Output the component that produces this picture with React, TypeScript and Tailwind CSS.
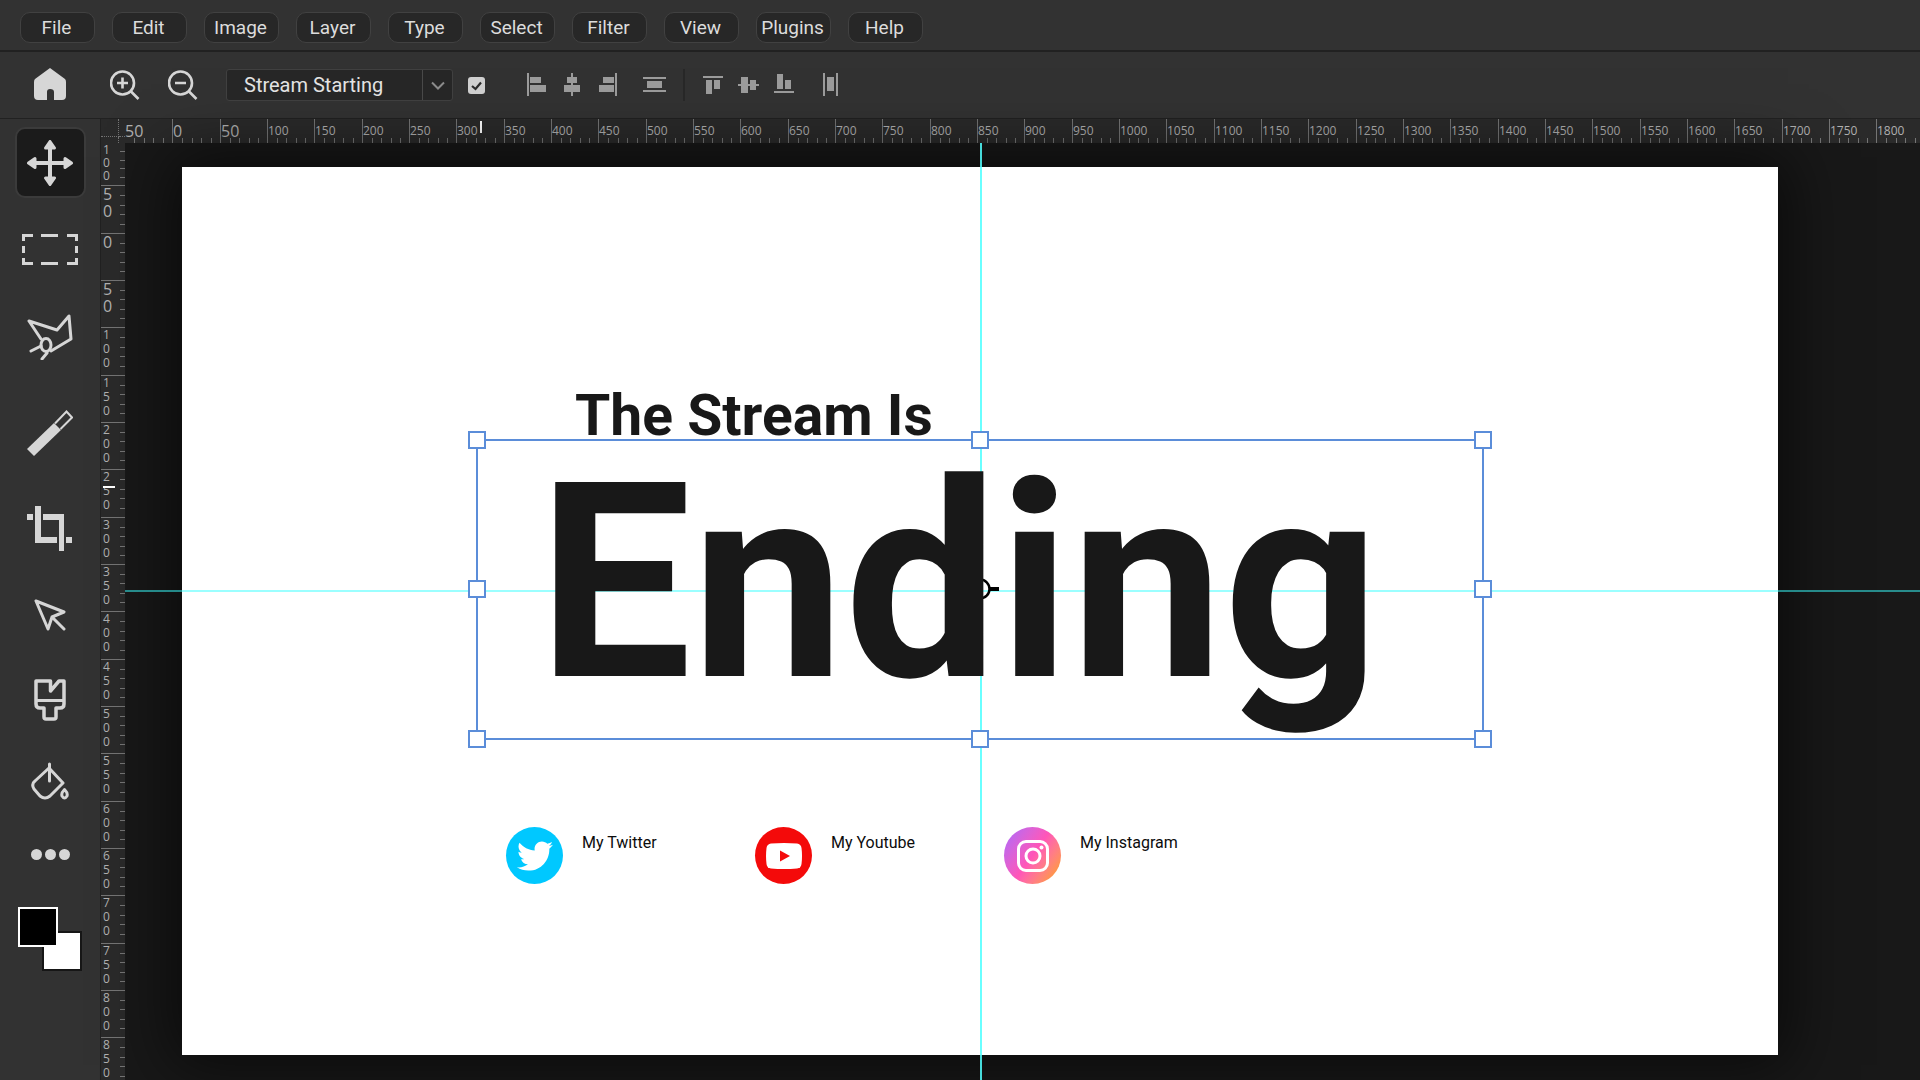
import type { ReactNode } from "react";
import { FaTwitter } from "react-icons/fa";

const menus = [
  "File",
  "Edit",
  "Image",
  "Layer",
  "Type",
  "Select",
  "Filter",
  "View",
  "Plugins",
  "Help",
];

// 50 ruler units on screen
const STEP = 142 / 3;

function MenuBar() {
  return (
    <nav className="flex h-[52px] shrink-0 items-center gap-[17px] border-b-2 border-[#212121] px-5 pt-1">
      {menus.map((menu) => (
        <button
          key={menu}
          type="button"
          className="flex h-[31px] w-[75px] items-center justify-center rounded-[10px] border border-[#414141] bg-[#272727] pt-px pr-0.5 text-[19px] leading-7 text-[#dcdcdc]"
        >
          {menu}
        </button>
      ))}
    </nav>
  );
}

function AlignButton({ label, children }: { label: string; children: ReactNode }) {
  return (
    <button type="button" aria-label={label}>
      <svg width="24" height="24" viewBox="0 0 24 24" fill="#9c9c9c">
        {children}
      </svg>
    </button>
  );
}

function OptionsBar() {
  return (
    <div className="flex h-[67px] shrink-0 items-center border-b border-[#212121] pl-[34px]">
      <button type="button" aria-label="Home">
        <svg width="32" height="34" viewBox="0 0 32 34" fill="#d6d6d6">
          <path d="M16 0 L31 11 Q32 12 32 14 V28 Q32 32 28 32 H20 V24 Q20 21 16 21 Q13 21 13 24 V32 H4 Q0 32 0 28 V14 Q0 12 1 11 Z" />
        </svg>
      </button>
      <div className="ml-11 flex gap-7">
        <button type="button" aria-label="Zoom in">
          <svg width="30" height="30" viewBox="0 0 30 30" fill="none" stroke="#d6d6d6" strokeWidth="2.6">
            <circle cx="12.500" cy="13" r="11.500" />
            <path d="M20.500 21 L28.500 29 M7 13 H18 M12.500 7.500 V18.500" />
          </svg>
        </button>
        <button type="button" aria-label="Zoom out">
          <svg width="30" height="30" viewBox="0 0 30 30" fill="none" stroke="#d6d6d6" strokeWidth="2.6">
            <circle cx="12.500" cy="13" r="11.500" />
            <path d="M20.500 21 L28.500 29 M7 13 H18" />
          </svg>
        </button>
      </div>
      <div className="relative ml-7 h-8 w-[227px]">
        <select
          aria-label="Scene"
          className="h-8 w-full appearance-none rounded-[3px] border border-[#414141] bg-[#272727] pr-8 pl-[17px] text-[20px] leading-7 text-[#e4e4e4]"
        >
          <option>Stream Starting</option>
          <option>Stream Ending</option>
        </select>
        <span className="pointer-events-none absolute inset-y-px right-px flex w-[30px] items-center justify-center border-l border-[#4a4a4a]">
          <svg width="14" height="9" viewBox="0 0 14 9" fill="none" stroke="#8c8c8c" strokeWidth="2">
            <path d="M1 1.500 L7 7.500 L13 1.500" />
          </svg>
        </span>
      </div>
      <label className="ml-[15px] grid h-[17px] w-[17px]">
        <input
          type="checkbox"
          defaultChecked
          aria-label="Show transform controls"
          className="peer col-start-1 row-start-1 appearance-none rounded-[3px] bg-[#d0d0d0]"
        />
        <svg
          className="pointer-events-none invisible col-start-1 row-start-1 peer-checked:visible"
          width="17"
          height="17"
          viewBox="0 0 17 17"
          fill="none"
          stroke="#2b2b2b"
          strokeWidth="2.2"
        >
          <path d="M4 9 L7.500 12 L13 5.500" />
        </svg>
      </label>
      <div className="ml-[42px] flex items-center gap-3">
        <AlignButton label="Align left edges">
          <path d="M0 0 H2 V23 H0 Z M3 4 H14 V10 H3 Z M3 12 H19 V19 H3 Z" />
        </AlignButton>
        <AlignButton label="Align horizontal centers">
          <path d="M8 0 H10 V23 H8 Z M4 4 H14 V10 H4 Z M1 12 H17 V19 H1 Z" />
        </AlignButton>
        <AlignButton label="Align right edges">
          <path d="M16 0 H18 V23 H16 Z M4 4 H15 V10 H4 Z M-1 12 H15 V19 H-1 Z" />
        </AlignButton>
      </div>
      <div className="ml-5 flex border-r-2 border-[#282828] py-1 pr-4">
        <AlignButton label="Distribute vertical centers">
          <path d="M0 4 H23 V6 H0 Z M4 8 H19 V15 H4 Z M0 17 H23 V19 H0 Z" />
        </AlignButton>
      </div>
      <div className="ml-[17px] flex items-center gap-3">
        <AlignButton label="Align top edges">
          <path d="M1 3 H21 V5 H1 Z M4 7 H10 V21 H4 Z M12 7 H18 V16 H12 Z" />
        </AlignButton>
        <AlignButton label="Align vertical centers">
          <path d="M0 11 H21 V13 H0 Z M3 4 H10 V20 H3 Z M12 7 H18 V17 H12 Z" />
        </AlignButton>
        <AlignButton label="Align bottom edges">
          <path d="M0 18 H20 V20 H0 Z M3 1 H9 V16 H3 Z M11 7 H17 V16 H11 Z" />
        </AlignButton>
      </div>
      <div className="ml-6 flex">
        <AlignButton label="Distribute horizontal centers">
          <path d="M1 0 H3 V23 H1 Z M5 4 H12 V18 H5 Z M14 0 H16 V23 H14 Z" />
        </AlignButton>
      </div>
    </div>
  );
}

function ToolBar() {
  return (
    <aside className="flex w-[101px] shrink-0 flex-col items-center overflow-hidden border-r border-[#212121] pt-2">
      <button
        type="button"
        aria-label="Move"
        className="mb-2 flex h-[71px] w-[71px] shrink-0 items-center justify-center rounded-[10px] border-2 border-[#3b3b3b] bg-[#1b1b1b]"
      >
        <svg width="46" height="46" viewBox="0 0 46 46" fill="#d6d6d6" stroke="#d6d6d6" strokeLinejoin="round">
          <path d="M23 6 V40 M6 23 H40" strokeWidth="4" />
          <path
            d="M23 1.500 L27.500 8 H18.500 Z M23 44.500 L27.500 38 H18.500 Z M1.500 23 L8 18.500 V27.500 Z M44.500 23 L38 18.500 V27.500 Z"
            strokeWidth="3"
          />
        </svg>
      </button>
      <button type="button" aria-label="Rectangular marquee" className="flex h-[87px] shrink-0 items-center">
        <svg width="56" height="31" viewBox="0 0 56 31" fill="none" stroke="#d6d6d6" strokeWidth="3">
          <path d="M11 1.500 H1.500 V7 M19 1.500 H36 M45 1.500 H54.500 V7 M1.500 12 V19 M54.500 12 V19 M1.500 24 V29.500 H11 M19 29.500 H36 M45 29.500 H54.500 V24" />
        </svg>
      </button>
      <button type="button" aria-label="Polygonal lasso" className="flex h-[87px] shrink-0 items-center">
        <svg width="46" height="46" viewBox="0 0 46 46" fill="none" stroke="#d6d6d6" strokeWidth="3" strokeLinecap="round" strokeLinejoin="round">
          <path d="M14 25 L2 7 L30 16 L42 2 L44 25 L24 37" />
          <ellipse cx="19" cy="31" rx="5" ry="6.500" />
          <path d="M14 32 L4 37 M20 39 L15 45" />
        </svg>
      </button>
      <button type="button" aria-label="Magic wand" className="flex h-[106px] shrink-0 items-center">
        <svg width="46" height="46" viewBox="0 0 46 46" stroke="#d6d6d6">
          <path d="M27 13 L34 20 L7 46 L0 39 Z" fill="#d6d6d6" stroke="none" />
          <path d="M28 13.500 L39.500 1.500 L45 7.500 L33.500 19" fill="none" strokeWidth="2" />
        </svg>
      </button>
      <button type="button" aria-label="Crop" className="flex h-[85px] shrink-0 items-center">
        <svg width="46" height="46" viewBox="0 0 46 46" fill="#d6d6d6">
          <path d="M0 8 H6 V14 H0 Z M8 0 H14 V31 H30 V37 H8 Z M16 8 H37 V45 H32 V14 H16 Z M39 31 H45 V37 H39 Z" />
        </svg>
      </button>
      <button type="button" aria-label="Path selection" className="flex h-[88px] shrink-0 items-center">
        <svg width="32" height="32" viewBox="0 0 32 32" fill="none" stroke="#d6d6d6" strokeWidth="3" strokeLinejoin="round" strokeLinecap="round">
          <path d="M2 2 L30 13 L18 18 L14 30 Z M19 19 L30 30" />
        </svg>
      </button>
      <button type="button" aria-label="Brush" className="flex h-[82px] shrink-0 items-center">
        <svg width="32" height="42" viewBox="0 0 32 42" fill="none" stroke="#d6d6d6" strokeWidth="3.500" strokeLinejoin="round">
          <path d="M2 2 H16.500 V12 L25 2 H30 V25 Q30 29 26 29 H22 V38 Q22 40 20 40 H12 Q10 40 10 38 V29 H6 Q2 29 2 25 Z" />
          <path d="M2 21.500 H30" strokeWidth="3" />
        </svg>
      </button>
      <button type="button" aria-label="Paint bucket" className="flex h-20 shrink-0 items-center">
        <svg width="38" height="38" viewBox="0 0 38 38" fill="none" stroke="#d6d6d6" strokeWidth="3" strokeLinecap="round" strokeLinejoin="round">
          <path d="M18 6 L32 21 L19 34 Q14 38 9 34 L3 27 Q0 22 4 19 Z M18.500 2 V19" />
          <path d="M33.500 27.500 Q37 31 36 34 Q33.500 38 31 34 Q30 31 33.500 27.500 Z" />
        </svg>
      </button>
      <button type="button" aria-label="More tools" className="flex h-[67px] shrink-0 items-center gap-[3px]">
        <span className="h-[11px] w-[11px] rounded-full bg-[#d6d6d6]" />
        <span className="h-[11px] w-[11px] rounded-full bg-[#d6d6d6]" />
        <span className="h-[11px] w-[11px] rounded-full bg-[#d6d6d6]" />
      </button>
      <div className="mt-[19px] grid h-16 w-16 shrink-0 grid-cols-[24px_16px_24px] grid-rows-[24px_16px_24px]">
        <button
          type="button"
          aria-label="Background color"
          className="col-span-2 col-start-2 row-span-2 row-start-2 border-2 border-[#161616] bg-white"
        />
        <button
          type="button"
          aria-label="Foreground color"
          className="z-10 col-span-2 col-start-1 row-span-2 row-start-1 border-2 border-white bg-black"
        />
      </div>
    </aside>
  );
}

function TopRuler() {
  const cells = Array.from({ length: 38 }, (_, i) => i);
  return (
    <div className="relative flex h-6 min-w-0 flex-1 overflow-hidden bg-[#2a2a2a] font-['Open_Sans',sans-serif] text-[#b0b0b0]">
      {cells.map((i) => (
        <div
          key={i}
          style={{ width: Math.round((i + 1) * STEP) - Math.round(i * STEP) }}
          className={
            i === 0
              ? "grid shrink-0 grid-rows-[19px_5px]"
              : "grid shrink-0 grid-rows-[19px_5px] border-l border-[#747474]"
          }
        >
          <span className={i < 3 ? "text-[16px] leading-6" : "text-[12px] leading-6"}>
            {Math.abs(i - 1) * 50}
          </span>
          <span className="grid grid-cols-5">
            <i />
            <i className="border-l border-[#747474]" />
            <i className="border-l border-[#747474]" />
            <i className="border-l border-[#747474]" />
            <i className="border-l border-[#747474]" />
          </span>
        </div>
      ))}
      <span className="absolute top-0.5 left-[355px] h-3 w-0.5 bg-white" />
    </div>
  );
}

function LeftRuler() {
  const cells = Array.from({ length: 20 }, (_, i) => i);
  return (
    <div className="relative flex w-6 shrink-0 flex-col overflow-hidden bg-[#2a2a2a] font-['Open_Sans',sans-serif] text-[#b0b0b0]">
      {cells.map((i) => {
        const size =
          i === 0
            ? "flex flex-col pl-0.5 text-[12px] leading-[13px]"
            : i < 4
              ? "flex flex-col pl-0.5 text-[16px] leading-[17px]"
              : "flex flex-col pl-0.5 text-[12px] leading-[14px]";
        return (
          <div
            key={i}
            style={{
              height: i === 0 ? 42 : Math.round((i + 1) * STEP) - Math.round(i * STEP),
            }}
            className={
              i === 0
                ? "flex shrink-0 justify-between"
                : "flex shrink-0 justify-between border-t border-[#747474]"
            }
          >
            <span className={size}>
              {String(Math.abs(i - 2) * 50)
                .split("")
                .map((digit, n) => (
                  <span key={n}>{digit}</span>
                ))}
            </span>
            <span className="grid w-[5px] grid-rows-5">
              <i />
              <i className="border-t border-[#747474]" />
              <i className="border-t border-[#747474]" />
              <i className="border-t border-[#747474]" />
              <i className="border-t border-[#747474]" />
            </span>
          </div>
        );
      })}
      <span className="absolute top-[343px] left-0.5 h-0.5 w-3 bg-white" />
    </div>
  );
}

function Selection() {
  const handle = "absolute h-[18px] w-[18px] border-2 border-[#5b8dd9] bg-white";
  return (
    <div className="absolute top-[272px] left-[294px] z-20 h-[301px] w-[1008px] border-2 border-[#5b8dd9]">
      <span className={`${handle} -top-2.5 -left-2.5`} />
      <span className={`${handle} -top-2.5 left-[493px]`} />
      <span className={`${handle} -top-2.5 -right-2.5`} />
      <span className={`${handle} top-[139px] -left-2.5`} />
      <span className={`${handle} top-[139px] -right-2.5`} />
      <span className={`${handle} -bottom-2.5 -left-2.5`} />
      <span className={`${handle} -bottom-2.5 left-[493px]`} />
      <span className={`${handle} -right-2.5 -bottom-2.5`} />
      <svg className="absolute top-[127px] left-[481px]" width="42" height="42" viewBox="0 0 42 42" fill="none" stroke="#000">
        <circle cx="21" cy="21" r="9.500" strokeWidth="2.5" />
        <path d="M31 21 H40 M2 21 H11" strokeWidth="4" />
      </svg>
    </div>
  );
}

function Social({ icon, name }: { icon: ReactNode; name: string }) {
  return (
    <div className="flex w-[249px] gap-[19px]">
      {icon}
      <p className="pt-1.5 text-[16px] leading-5">{name}</p>
    </div>
  );
}

function Canvas() {
  return (
    <main className="relative min-h-0 min-w-0 flex-1 bg-[#181818] pt-6 pr-[142px] pb-[25px] pl-[57px]">
      <span className="absolute inset-y-0 left-[855px] z-10 w-0.5 bg-[#50ffff]/85" />
      <span className="absolute inset-x-0 top-[447px] z-10 h-0.5 bg-[#38ffff]/50" />
      <div className="relative h-full bg-white text-[#181818] shadow-[0_0_60px_10px_rgba(0,0,0,0.6)]">
        <h2 className="absolute top-[219px] left-[393px] z-30 text-[57px] leading-[60px] font-bold whitespace-nowrap">
          The Stream Is
        </h2>
        <Selection />
        <h1 className="absolute top-[286px] left-[356px] z-30 text-[273px] leading-[260px] font-bold whitespace-nowrap">
          Ending
        </h1>
        <div className="absolute top-[660px] left-[324px] z-30 flex text-[#0c0c0c]">
          <Social
            name="My Twitter"
            icon={
              <span className="flex h-[57px] w-[57px] items-center justify-center rounded-full bg-[#00c8ff] text-[36px] text-white">
                <FaTwitter />
              </span>
            }
          />
          <Social
            name="My Youtube"
            icon={
              <span className="flex h-[57px] w-[57px] items-center justify-center rounded-full bg-[#f40a0a] text-white">
                <svg width="36" height="26" viewBox="0 0 36 26">
                  <path d="M5 0.500 Q18 -0.500 31 0.500 Q35 1 35.500 5 Q36.500 13 35.500 21 Q35 25 31 25.500 Q18 26.500 5 25.500 Q1 25 0.500 21 Q-0.500 13 0.500 5 Q1 1 5 0.500 Z" fill="#fff" />
                  <path d="M14 7.500 L24 13 L14 18.500 Z" fill="#f40a0a" />
                </svg>
              </span>
            }
          />
          <Social
            name="My Instagram"
            icon={
              <span className="flex h-[57px] w-[57px] items-center justify-center rounded-full bg-linear-125 from-[#a866ff] via-[#ff55b8] to-[#ff9a2e] to-90%">
                <svg width="32" height="32" viewBox="0 0 32 32" fill="none" stroke="#fff" strokeWidth="3">
                  <rect x="1.500" y="1.500" width="29" height="29" rx="7.500" />
                  <circle cx="16" cy="16" r="7" />
                  <circle cx="24.500" cy="7.500" r="2" fill="#fff" stroke="none" />
                </svg>
              </span>
            }
          />
        </div>
      </div>
    </main>
  );
}

export default function App() {
  return (
    <div className="flex h-screen flex-col overflow-hidden bg-[#323232] font-['Roboto',sans-serif]">
      <MenuBar />
      <OptionsBar />
      <div className="flex min-h-0 flex-1">
        <ToolBar />
        <div className="flex min-w-0 flex-1 flex-col">
          <div className="flex shrink-0">
            <div className="grid h-6 w-6 shrink-0 grid-cols-[18px_6px] grid-rows-[18px_6px] bg-[#2a2a2a]">
              <span className="border-r border-b border-dotted border-[#747474]" />
              <span className="border-b border-dotted border-[#747474]" />
              <span className="border-r border-dotted border-[#747474]" />
            </div>
            <TopRuler />
          </div>
          <div className="flex min-h-0 flex-1">
            <LeftRuler />
            <Canvas />
          </div>
        </div>
      </div>
    </div>
  );
}
